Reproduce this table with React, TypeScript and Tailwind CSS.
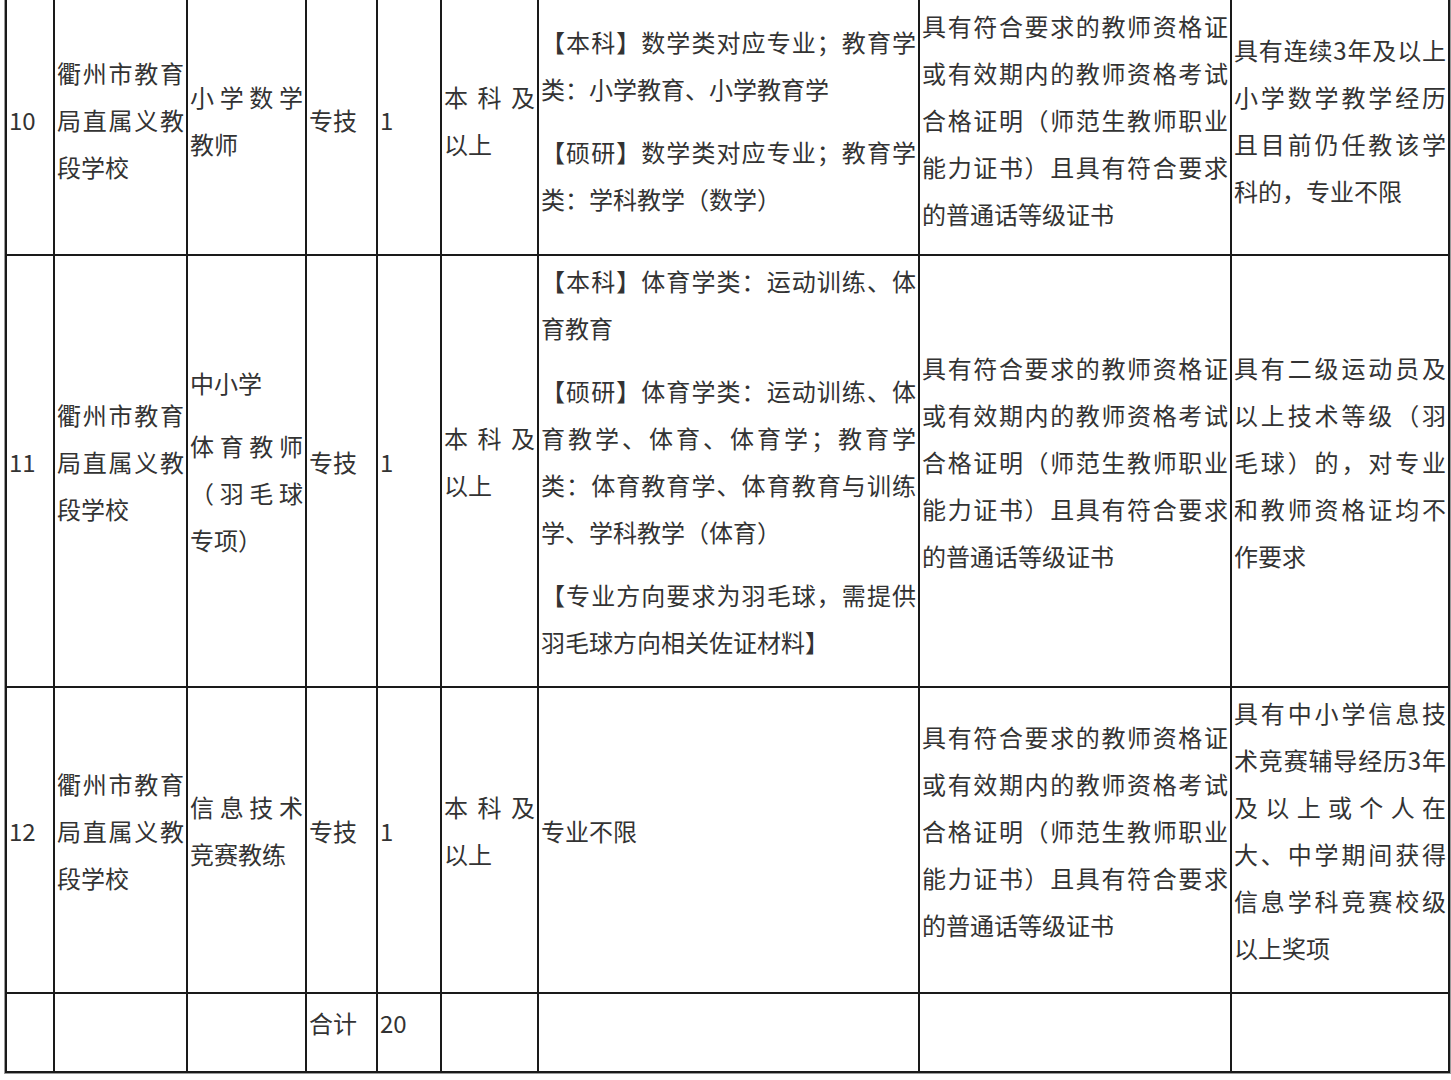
import React from 'react';

interface Row {
  no: string;
  unit: string;
  post: string[];
  type: string;
  num: string;
  edu: string;
  major: string[];
  cert: string;
  other: string;
}

const CERT =
  '具有符合要求的教师资格证或有效期内的教师资格考试合格证明（师范生教师职业能力证书）且具有符合要求的普通话等级证书';
const UNIT = '衢州市教育局直属义教段学校';

const rows: Row[] = [
  {
    no: '10',
    unit: UNIT,
    post: ['小学数学教师'],
    type: '专技',
    num: '1',
    edu: '本科及以上',
    major: [
      '【本科】数学类对应专业；教育学类：小学教育、小学教育学',
      '【硕研】数学类对应专业；教育学类：学科教学（数学）',
    ],
    cert: CERT,
    other: '具有连续3年及以上小学数学教学经历且目前仍任教该学科的，专业不限',
  },
  {
    no: '11',
    unit: UNIT,
    post: ['中小学', '体育教师（羽毛球专项）'],
    type: '专技',
    num: '1',
    edu: '本科及以上',
    major: [
      '【本科】体育学类：运动训练、体育教育',
      '【硕研】体育学类：运动训练、体育教学、体育、体育学；教育学类：体育教育学、体育教育与训练学、学科教学（体育）',
      '【专业方向要求为羽毛球，需提供羽毛球方向相关佐证材料】',
    ],
    cert: CERT,
    other: '具有二级运动员及以上技术等级（羽毛球）的，对专业和教师资格证均不作要求',
  },
  {
    no: '12',
    unit: UNIT,
    post: ['信息技术竞赛教练'],
    type: '专技',
    num: '1',
    edu: '本科及以上',
    major: ['专业不限'],
    cert: CERT,
    other:
      '具有中小学信息技术竞赛辅导经历3年及以上或个人在大、中学期间获得信息学科竞赛校级以上奖项',
  },
];

// column widths, measured between border centres
const widths = [48, 133, 119, 71, 64, 97, 381, 312, 218];

const Cell = ({ lines, first = false }: { lines: string[]; first?: boolean }) => (
  <td
    className={
      first
        ? 'border-2 border-[#1a1a1a] px-[2px] pt-[4px] pb-[5px] align-middle'
        : 'border-2 border-[#1a1a1a] px-[2px] pt-[1px] pb-[5px] align-middle'
    }
  >
    {lines.map((t, i) => (
      <p key={i} className={first ? 'mb-[16px] text-justify last:mb-[12px]' : 'mb-[16px] text-justify'}>
        {t}
      </p>
    ))}
  </td>
);

export default function App() {
  return (
    <div className="min-h-[1080px] bg-white">
      <div className="ml-[4px] -mt-[5px] w-[1447px] border border-[#9a9a9a]">
        <table
          className="w-[1445px] table-fixed border-collapse text-[24px] leading-[47px] text-[#333] [text-spacing-trim:space-all]"
          style={{ fontFamily: '"Noto Sans CJK SC", "Noto Sans", sans-serif' }}
        >
          <colgroup>
            {widths.map((w, i) => (
              <col key={i} style={{ width: w }} />
            ))}
          </colgroup>
          <tbody>
            {rows.map((r, idx) => {
              const first = idx === 0;
              return (
                <tr key={r.no}>
                  <Cell first={first} lines={[r.no]} />
                  <Cell first={first} lines={[r.unit]} />
                  <Cell first={first} lines={r.post} />
                  <Cell first={first} lines={[r.type]} />
                  <Cell first={first} lines={[r.num]} />
                  <Cell first={first} lines={[r.edu]} />
                  <Cell first={first} lines={r.major} />
                  <Cell first={first} lines={[r.cert]} />
                  <Cell first={first} lines={[r.other]} />
                </tr>
              );
            })}
            <tr className="h-[79px]">
              <Cell lines={[]} />
              <Cell lines={[]} />
              <Cell lines={[]} />
              <Cell lines={['合计']} />
              <Cell lines={['20']} />
              <Cell lines={[]} />
              <Cell lines={[]} />
              <Cell lines={[]} />
              <Cell lines={[]} />
            </tr>
          </tbody>
        </table>
      </div>
    </div>
  );
}
